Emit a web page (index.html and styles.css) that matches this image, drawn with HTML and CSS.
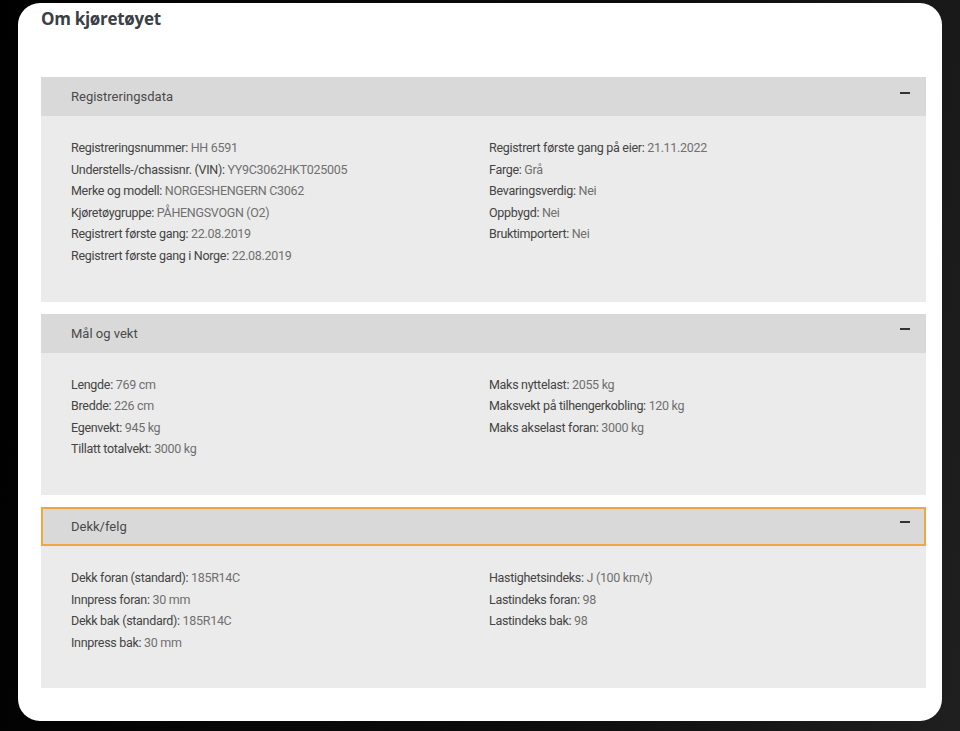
FILE: index.html
```html
<!DOCTYPE html>
<html lang="no">
<head>
  <meta charset="UTF-8">
  <meta name="viewport" content="width=device-width, initial-scale=1.0">
  <title>Om kjøretøyet</title>
  <link rel="stylesheet" href="styles.css">
</head>
<body>
  <div class="card">
    <h1>Om kjøretøyet</h1>

    <section class="panel">
      <div class="panel-head">
        <span>Registreringsdata</span>
        <span class="toggle"></span>
      </div>
      <div class="panel-body">
        <ul>
          <li><b>Registreringsnummer:</b> HH 6591</li>
          <li><b>Understells-/chassisnr. (VIN):</b> YY9C3062HKT025005</li>
          <li><b>Merke og modell:</b> NORGESHENGERN C3062</li>
          <li><b>Kjøretøygruppe:</b> PÅHENGSVOGN (O2)</li>
          <li><b>Registrert første gang:</b> 22.08.2019</li>
          <li><b>Registrert første gang i Norge:</b> 22.08.2019</li>
        </ul>
        <ul>
          <li><b>Registrert første gang på eier:</b> 21.11.2022</li>
          <li><b>Farge:</b> Grå</li>
          <li><b>Bevaringsverdig:</b> Nei</li>
          <li><b>Oppbygd:</b> Nei</li>
          <li><b>Bruktimportert:</b> Nei</li>
        </ul>
      </div>
    </section>

    <section class="panel">
      <div class="panel-head">
        <span>Mål og vekt</span>
        <span class="toggle"></span>
      </div>
      <div class="panel-body">
        <ul>
          <li><b>Lengde:</b> 769 cm</li>
          <li><b>Bredde:</b> 226 cm</li>
          <li><b>Egenvekt:</b> 945 kg</li>
          <li><b>Tillatt totalvekt:</b> 3000 kg</li>
        </ul>
        <ul>
          <li><b>Maks nyttelast:</b> 2055 kg</li>
          <li><b>Maksvekt på tilhengerkobling:</b> 120 kg</li>
          <li><b>Maks akselast foran:</b> 3000 kg</li>
        </ul>
      </div>
    </section>

    <section class="panel">
      <div class="panel-head focused">
        <span>Dekk/felg</span>
        <span class="toggle"></span>
      </div>
      <div class="panel-body">
        <ul>
          <li><b>Dekk foran (standard):</b> 185R14C</li>
          <li><b>Innpress foran:</b> 30 mm</li>
          <li><b>Dekk bak (standard):</b> 185R14C</li>
          <li><b>Innpress bak:</b> 30 mm</li>
        </ul>
        <ul>
          <li><b>Hastighetsindeks:</b> J (100 km/t)</li>
          <li><b>Lastindeks foran:</b> 98</li>
          <li><b>Lastindeks bak:</b> 98</li>
        </ul>
      </div>
    </section>
  </div>
</body>
</html>
```

FILE: styles.css
```css
html, body {
  height: 100%;
}
body {
  margin: 0;
  padding: 3px 18px 10px 18px;
  box-sizing: border-box;
  background: linear-gradient(100deg, #000 0%, #0c0c0c 60%, #1f1f1f 100%);
  font-family: Roboto, "Liberation Sans", sans-serif;
}
.card {
  background: #fff;
  border-radius: 22px;
  height: 718px;
  padding: 0 16px 0 23px;
  box-sizing: border-box;
  overflow: hidden;
}
h1 {
  margin: 0;
  padding-top: 4px;
  height: 74px;
  box-sizing: border-box;
  font-family: "Open Sans", sans-serif;
  font-size: 17px;
  font-weight: 700;
  color: #3b4046;
  letter-spacing: -0.3px;
}
.panel {
  margin-bottom: 12px;
  background: #ebebeb;
}
.panel-head {
  display: flex;
  justify-content: space-between;
  align-items: center;
  height: 39px;
  padding: 0 16px 0 30px;
  background: #d9d9d9;
  font-size: 13px;
  color: #4a4a4a;
  box-sizing: border-box;
}
/* keyboard focus ring on the header */
.panel-head.focused {
  border: 2px solid #f2a540;
  padding-left: 28px;
  padding-right: 14px;
}
.toggle {
  width: 10px;
  height: 2px;
  background: #333;
  margin-top: -8px;
}
.panel-body {
  display: grid;
  grid-template-columns: 418px 1fr;
  padding: 21px 30px 35px 30px;
}
ul {
  list-style: none;
  margin: 0;
  padding: 0;
}
li {
  font-size: 12.5px;
  line-height: 21.6px;
  color: #707070;
  letter-spacing: -0.3px;
}
li b {
  font-weight: 400;
  color: #444;
}
```
